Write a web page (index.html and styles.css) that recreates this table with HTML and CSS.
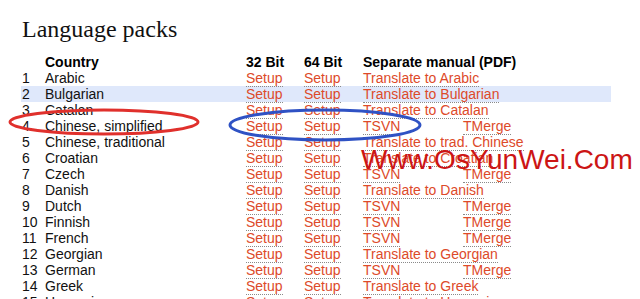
FILE: index.html
```html
<!DOCTYPE html>
<html>
<head>
<meta charset="utf-8">
<link rel="stylesheet" href="styles.css">
</head>
<body>
<div class="page">
  <h1 class="title">Language packs</h1>
  <table class="packs">
    <colgroup>
      <col class="c-num"><col class="c-country"><col class="c-b32"><col class="c-b64"><col class="c-tsvn"><col class="c-merge">
    </colgroup>
    <thead>
      <tr><th></th><th>Country</th><th>32 Bit</th><th>64 Bit</th><th colspan="2">Separate manual (PDF)</th></tr>
    </thead>
    <tbody>
      <tr><td>1</td><td>Arabic</td><td><a>Setup</a></td><td><a>Setup</a></td><td colspan="2"><a>Translate to Arabic</a></td></tr>
      <tr class="hl"><td>2</td><td>Bulgarian</td><td><a>Setup</a></td><td><a>Setup</a></td><td colspan="2"><a>Translate to Bulgarian</a></td></tr>
      <tr><td>3</td><td>Catalan</td><td><a>Setup</a></td><td><a>Setup</a></td><td colspan="2"><a>Translate to Catalan</a></td></tr>
      <tr><td>4</td><td>Chinese, simplified</td><td><a>Setup</a></td><td><a>Setup</a></td><td><a>TSVN</a></td><td><a>TMerge</a></td></tr>
      <tr><td>5</td><td>Chinese, traditional</td><td><a>Setup</a></td><td><a>Setup</a></td><td colspan="2"><a>Translate to trad. Chinese</a></td></tr>
      <tr><td>6</td><td>Croatian</td><td><a>Setup</a></td><td><a>Setup</a></td><td colspan="2"><a>Translate to Croatian</a></td></tr>
      <tr><td>7</td><td>Czech</td><td><a>Setup</a></td><td><a>Setup</a></td><td><a>TSVN</a></td><td><a>TMerge</a></td></tr>
      <tr><td>8</td><td>Danish</td><td><a>Setup</a></td><td><a>Setup</a></td><td colspan="2"><a>Translate to Danish</a></td></tr>
      <tr><td>9</td><td>Dutch</td><td><a>Setup</a></td><td><a>Setup</a></td><td><a>TSVN</a></td><td><a>TMerge</a></td></tr>
      <tr><td>10</td><td>Finnish</td><td><a>Setup</a></td><td><a>Setup</a></td><td><a>TSVN</a></td><td><a>TMerge</a></td></tr>
      <tr><td>11</td><td>French</td><td><a>Setup</a></td><td><a>Setup</a></td><td><a>TSVN</a></td><td><a>TMerge</a></td></tr>
      <tr><td>12</td><td>Georgian</td><td><a>Setup</a></td><td><a>Setup</a></td><td colspan="2"><a>Translate to Georgian</a></td></tr>
      <tr><td>13</td><td>German</td><td><a>Setup</a></td><td><a>Setup</a></td><td><a>TSVN</a></td><td><a>TMerge</a></td></tr>
      <tr><td>14</td><td>Greek</td><td><a>Setup</a></td><td><a>Setup</a></td><td colspan="2"><a>Translate to Greek</a></td></tr>
      <tr><td>15</td><td>Hungarian</td><td><a>Setup</a></td><td><a>Setup</a></td><td colspan="2"><a>Translate to Hungarian</a></td></tr>
    </tbody>
  </table>
</div>
<svg class="marks" width="640" height="299" viewBox="0 0 640 299">
  <ellipse cx="104" cy="122" rx="94" ry="12" fill="none" stroke="#e0302c" stroke-width="3"/>
  <ellipse cx="325" cy="125" rx="95" ry="15" fill="none" stroke="#2f52c4" stroke-width="3"/>
</svg>
<div class="watermark">Www.OsYunWei.Com</div>
</body>
</html>
```

FILE: styles.css
```css
html, body {
  margin: 0;
  padding: 0;
  background: #fff;
  overflow: hidden;
}
.page {
  padding: 15px 0 0 21px;
}
.title {
  margin: 0 0 11px 1px;
  font-family: "Liberation Serif", serif;
  font-weight: normal;
  font-size: 24px;
  line-height: 28px;
  color: #111;
}
.packs {
  border-collapse: collapse;
  table-layout: fixed;
  width: 590px;
  font-family: "Liberation Sans", Arial, sans-serif;
  font-size: 14px;
  color: #111;
}
.c-num { width: 24px; }
.c-country { width: 201px; }
.c-b32 { width: 58px; }
.c-b64 { width: 59px; }
.c-tsvn { width: 100px; }
.c-merge { width: 148px; }
.packs th, .packs td {
  padding: 0;
  height: 16px;
  line-height: 16px;
  text-align: left;
  vertical-align: top;
  white-space: nowrap;
}
.packs td:first-child { padding-left: 1px; }
.packs th { font-weight: bold; color: #000; }
.packs tr.hl td { background: #dfe8fb; }
.packs a {
  color: #dd4a2a;
  text-decoration: none;
  border-bottom: 1px dotted #8a8a8a;
}
.marks {
  position: absolute;
  left: 0;
  top: 0;
}
.watermark {
  position: absolute;
  left: 361px;
  top: 143px;
  font-family: "Liberation Sans", Arial, sans-serif;
  font-size: 28px;
  line-height: 34px;
  color: #cc1515;
  white-space: nowrap;
}
```
